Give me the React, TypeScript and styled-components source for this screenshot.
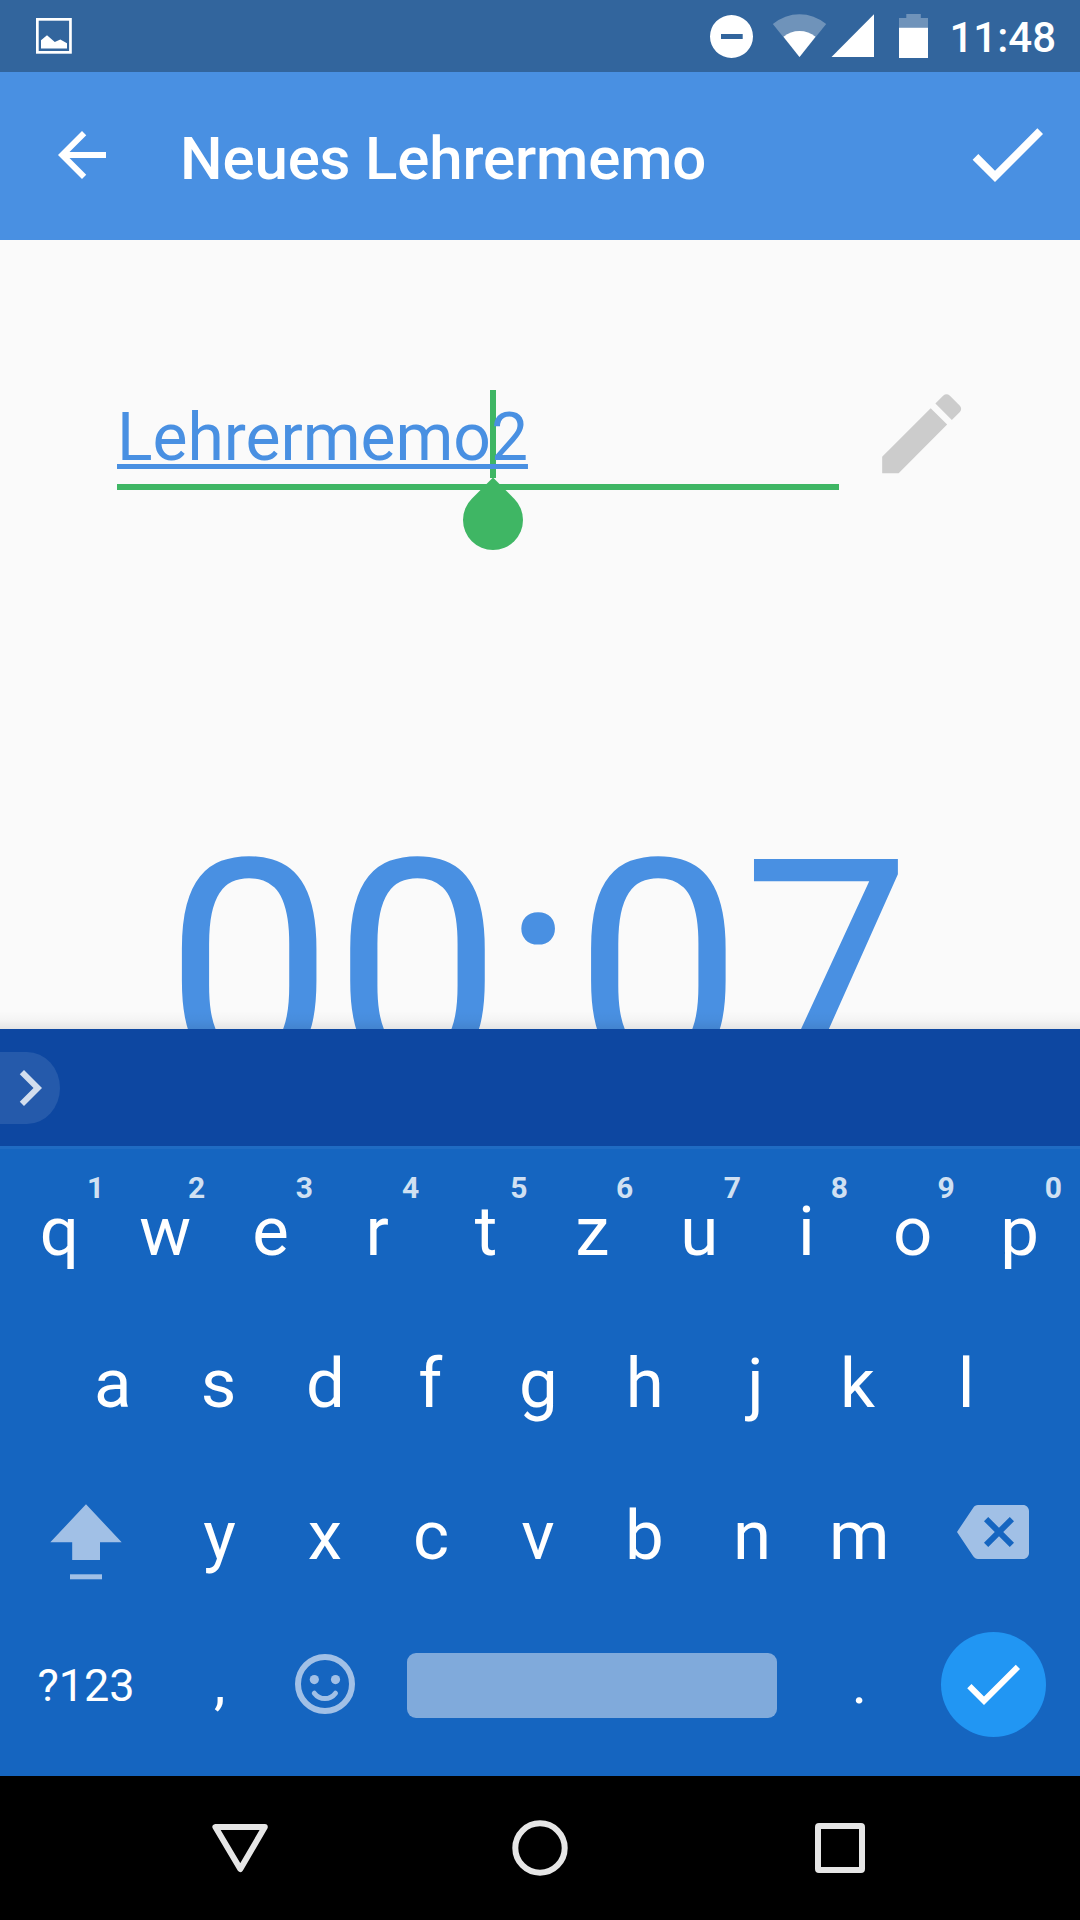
import React from "react";
import styled, { createGlobalStyle } from "styled-components";

const GlobalStyle = createGlobalStyle`
  * { box-sizing: border-box; }
  body { margin: 0; background: #000; }
  svg { display: block; flex: none; }
`;

const Screen = styled.div`
  width: 1080px;
  height: 1920px;
  display: flex;
  flex-direction: column;
  overflow: hidden;
  font-family: Roboto, "Noto Sans", sans-serif;
`;

const StatusBar = styled.header`
  height: 72px;
  flex: none;
  display: flex;
  align-items: center;
  justify-content: space-between;
  padding: 0 24px 0 36px;
  background: #32659d;
`;

const StatusGroup = styled.div`
  display: flex;
  align-items: center;
`;

const Time = styled.span`
  margin-left: 20px;
  font-size: 42px;
  font-weight: 500;
  line-height: 72px;
  padding-top: 3px;
  color: #fff;
`;

const AppBar = styled.div`
  height: 168px;
  flex: none;
  display: flex;
  align-items: center;
  padding: 0 25px 0 46px;
  background: #4990e2;
`;

const Title = styled.h1`
  flex: 1;
  margin: 0 0 0 62px;
  padding-top: 5px;
  font-size: 60px;
  font-weight: 500;
  line-height: 70px;
  letter-spacing: -0.15px;
  color: #fff;
`;

const IconButton = styled.button<{ $size: number; $lift?: number }>`
  width: ${(p) => p.$size}px;
  height: ${(p) => p.$size}px;
  margin: 0 0 ${(p) => p.$lift ?? 0}px;
  padding: 0;
  border: 0;
  background: none;
`;

const Content = styled.main`
  height: 789px;
  flex: none;
  background: #fafafa;
`;

const NameRow = styled.div`
  display: flex;
  align-items: flex-start;
  padding: 150px 0 0 117px;
`;

const Field = styled.div`
  position: relative;
  width: 722px;
  height: 100px;
  border-bottom: 6px solid #3fb664;
`;

const FieldText = styled.span`
  position: relative;
  z-index: 1;
  display: block;
  padding-top: 4px;
  font-size: 66px;
  line-height: 88px;
  letter-spacing: -0.05px;
  color: #4990e2;
  text-decoration: underline;
  text-decoration-thickness: 4.5px;
  text-underline-offset: 4px;
`;

const Caret = styled.i`
  position: absolute;
  left: 373px;
  top: 0;
  width: 6px;
  height: 88px;
  background: #3fb664;
`;

const Handle = styled.i`
  position: absolute;
  left: 346px;
  top: 100px;
  width: 60px;
  height: 60px;
  border-radius: 0 50% 50% 50%;
  transform: rotate(45deg);
  background: #3fb664;
`;

const EditButton = styled(IconButton)`
  margin: -9px 0 0 30px;
`;

const Timer = styled.div`
  margin-top: 329.5px;
  padding-right: 4px;
  font-size: 299.5px;
  line-height: 300px;
  text-align: center;
  color: #4990e2;
`;

const Keyboard = styled.section`
  position: relative;
  z-index: 1;
  height: 747px;
  flex: none;
  display: flex;
  flex-direction: column;
  background: #1565c0;
`;

const Shade = styled.div`
  position: absolute;
  left: 0;
  right: 0;
  top: -18px;
  height: 18px;
  background: linear-gradient(rgba(0, 0, 0, 0), rgba(0, 0, 0, 0.025) 50%, rgba(0, 0, 0, 0.085));
`;

const Suggestions = styled.div`
  height: 120px;
  flex: none;
  display: flex;
  align-items: center;
  border-bottom: 3px solid #1f6bc3;
  background: #0d47a1;
`;

const Expand = styled.button`
  width: 60px;
  height: 72px;
  margin: 1px 0 0;
  padding: 0;
  display: flex;
  align-items: center;
  border: 0;
  border-radius: 0 33px 33px 0 / 0 36px 36px 0;
  background: #255aab;
  overflow: hidden;
`;

const ExpandIcon = styled.svg`
  margin-left: -6px;
`;

const Rows = styled.div`
  padding: 6px 7px 0 5px;
`;

const Row = styled.div<{ $inset?: number }>`
  height: 152px;
  display: flex;
  padding: 0 ${(p) => p.$inset ?? 0}px;
`;

const Key = styled.div<{ $span?: number; $size?: number; $shift?: number; $nudge?: number }>`
  position: relative;
  width: ${(p) => (p.$span ?? 1) * 106.8}px;
  height: 152px;
  flex: none;
  display: flex;
  align-items: center;
  justify-content: center;
  padding-top: ${(p) => Math.max(0, p.$shift ?? 0)}px;
  padding-bottom: ${(p) => Math.max(0, -(p.$shift ?? 0))}px;
  padding-left: ${(p) => 2 * Math.max(0, p.$nudge ?? 0)}px;
  padding-right: ${(p) => 2 * Math.max(0, -(p.$nudge ?? 0))}px;
  font-size: ${(p) => p.$size ?? 69}px;
  line-height: 1;
  color: #fff;
`;

const Hint = styled.sup<{ $nudge: number }>`
  position: absolute;
  right: ${(p) => 11.5 - p.$nudge}px;
  top: 18px;
  font-size: 30px;
  font-weight: 700;
  line-height: 30px;
  color: #d0e0f2;
`;

const Space = styled.div`
  width: 370px;
  height: 65px;
  border-radius: 9px;
  background: #80aadb;
`;

const Enter = styled.div`
  width: 105px;
  height: 105px;
  display: flex;
  align-items: center;
  justify-content: center;
  border-radius: 50%;
  background: #2196f3;
`;

const NavBar = styled.nav`
  height: 144px;
  flex: none;
  display: grid;
  grid-template-columns: repeat(3, 300px);
  justify-content: center;
  align-items: center;
  justify-items: center;
  background: #000;
`;

const SOFT = "#a1c0e6";
const NAV = "#e6e6e6";

const CheckIcon = ({ size }: { size: number }) => (
  <svg width={size} height={size} viewBox="0 0 24 24" fill="#fff">
    <path d="M9 16.17L4.83 12l-1.42 1.41L9 19 21 7l-1.41-1.41z" />
  </svg>
);

const PictureIcon = () => (
  <svg width="36" height="36" viewBox="0 0 36 36">
    <rect x="1.35" y="1.35" width="33.1" height="33" fill="none" stroke="#fff" strokeWidth="2.7" />
    <path d="M5 30.6V22.2L11 17.2L18.8 24L24.3 21.4L31 25.2V30.6Z" fill="#fff" />
  </svg>
);

/* do-not-disturb, wifi, cell signal and battery share one strip */
const StatusIcons = () => (
  <svg width="220" height="48" viewBox="709 12 220 48" fill="#fff">
    <path
      fillRule="evenodd"
      d="M731.5 15a21.5 21.5 0 1 0 0 43a21.5 21.5 0 1 0 0-43zM721 34h21.7v5H721z"
    />
    <path d="M799.5 57L772.8 24Q785 14.2 799.5 14.2T826.2 24Z" opacity="0.3" />
    <path d="M799.5 57L783.5 36.8Q790.5 31 799.5 31T815.5 36.8Z" />
    <path d="M831.5 57H874V14.3Z" />
    <path d="M899 27.7V18H906.3V14H920.8V18H928V27.7Z" opacity="0.3" />
    <path d="M899 27.7H928V58H899Z" />
  </svg>
);

const ShiftIcon = () => (
  <svg width="72" height="76" viewBox="0 0 72 76" fill={SOFT}>
    <path d="M36 0.3L71.7 38.3H50V56H22.2V38.3H0.3Z" />
    <rect x="20" y="70.3" width="32" height="5" />
  </svg>
);

const BackspaceIcon = () => (
  <svg width="72" height="54" viewBox="0 3 24 18" fill={SOFT}>
    <path d="M22 3H7c-.69 0-1.23.35-1.59.88L0 12l5.41 8.11c.36.53.9.89 1.59.89h15c1.1 0 2-.9 2-2V5c0-1.1-.9-2-2-2zm-3 12.59L17.59 17 14 13.41 10.41 17 9 15.59 12.59 12 9 8.41 10.41 7 14 10.59 17.59 7 19 8.41 15.41 12 19 15.59z" />
  </svg>
);

const SmileIcon = () => (
  <svg width="60" height="60" viewBox="0 0 60 60" fill="none" stroke={SOFT}>
    <circle cx="30" cy="30" r="27" strokeWidth="6" />
    <circle cx="19.3" cy="25.6" r="4.6" fill={SOFT} stroke="none" />
    <circle cx="40.5" cy="25.6" r="4.6" fill={SOFT} stroke="none" />
    <path d="M19.3 39.2Q23.5 44.6 29.9 44.6T40.5 39.2" strokeWidth="5" strokeLinecap="round" />
  </svg>
);

/* letter, optical offset of the letter, optical offset of its digit */
const topRow: [string, number, number][] = [
  ["q", 1, 4],
  ["w", 0, -2],
  ["e", -1.5, -1],
  ["r", -1.5, -1.5],
  ["t", 0.5, 0],
  ["z", 0, -1],
  ["u", 0, 0],
  ["i", 0.5, 0],
  ["o", 0, 0],
  ["p", 0, 0.5],
];
const homeRow: [string, number][] = [
  ["a", 1],
  ["s", 0],
  ["d", 0],
  ["f", -2],
  ["g", -0.5],
  ["h", -1],
  ["j", 3],
  ["k", -2],
  ["l", 0],
];
const lowerRow: [string, number][] = [
  ["y", 1],
  ["x", -0.5],
  ["c", -1],
  ["v", -1],
  ["b", -1.5],
  ["n", -0.5],
  ["m", 0],
];

export default function App() {
  return (
    <Screen>
      <GlobalStyle />
      <StatusBar>
        <PictureIcon />
        <StatusGroup>
          <StatusIcons />
          <Time>11:48</Time>
        </StatusGroup>
      </StatusBar>

      <AppBar>
        <IconButton $size={72} $lift={2} aria-label="Zurück">
          <svg width="72" height="72" viewBox="0 0 24 24" fill="#fff">
            <path d="M20 11H7.83l5.59-5.59L12 4l-8 8 8 8 1.41-1.41L7.83 13H20v-2z" />
          </svg>
        </IconButton>
        <Title>Neues Lehrermemo</Title>
        <IconButton $size={96} $lift={5} aria-label="Speichern">
          <CheckIcon size={96} />
        </IconButton>
      </AppBar>

      <Content>
        <NameRow>
          <Field>
            <FieldText>Lehrermemo2</FieldText>
            <Caret />
            <Handle />
          </Field>
          <EditButton $size={105} aria-label="Bearbeiten">
            <svg width="105.3" height="105.3" viewBox="0 0 24 24" fill="#ccc">
              <path d="M3 17.25V21h3.75L17.81 9.94l-3.75-3.75L3 17.25zM20.71 7.04c.39-.39.39-1.02 0-1.41l-2.34-2.34c-.39-.39-1.02-.39-1.41 0l-1.83 1.83 3.75 3.75 1.83-1.83z" />
            </svg>
          </EditButton>
        </NameRow>
        <Timer>00:07</Timer>
      </Content>

      <Keyboard>
        <Shade />
        <Suggestions>
          <Expand aria-label="Mehr">
            <ExpandIcon width="72" height="72" viewBox="0 0 24 24" fill="#d3deee">
              <path d="M10 6L8.59 7.41 13.17 12l-4.58 4.59L10 18l6-6z" />
            </ExpandIcon>
          </Expand>
        </Suggestions>
        <Rows>
          <Row>
            {topRow.map(([letter, nudge, hintNudge], i) => (
              <Key key={letter} $nudge={nudge}>
                {letter}
                <Hint $nudge={hintNudge}>{(i + 1) % 10}</Hint>
              </Key>
            ))}
          </Row>
          <Row $inset={53.4}>
            {homeRow.map(([letter, nudge]) => (
              <Key key={letter} $nudge={nudge}>
                {letter}
              </Key>
            ))}
          </Row>
          <Row>
            <Key $span={1.5} $shift={13} $nudge={1}>
              <ShiftIcon />
            </Key>
            {lowerRow.map(([letter, nudge]) => (
              <Key key={letter} $nudge={nudge}>
                {letter}
              </Key>
            ))}
            <Key $span={1.5} $shift={-6}>
              <BackspaceIcon />
            </Key>
          </Row>
          <Row>
            <Key $span={1.5} $size={45} $shift={-4} $nudge={1}>
              ?123
            </Key>
            <Key $size={58} $shift={-8} $nudge={1}>
              ,
            </Key>
            <Key $shift={-6}>
              <SmileIcon />
            </Key>
            <Key $span={4} $shift={-3}>
              <Space />
            </Key>
            <Key $size={58} $shift={-8}>
              .
            </Key>
            <Key $span={1.5} $shift={-6} $nudge={0.5}>
              <Enter>
                <CheckIcon size={72} />
              </Enter>
            </Key>
          </Row>
        </Rows>
      </Keyboard>

      <NavBar>
        <svg width="58" height="52" viewBox="211 1822 58 52" fill="none" stroke={NAV} strokeWidth="6" strokeLinejoin="round">
          <path d="M215.4 1827H264.8L240.3 1869Z" />
        </svg>
        <svg width="56" height="56" viewBox="0 0 56 56" fill="none" stroke={NAV} strokeWidth="6">
          <circle cx="28" cy="28" r="24.7" />
        </svg>
        <svg width="50" height="50" viewBox="0 0 50 50" fill="none" stroke={NAV} strokeWidth="6">
          <rect x="3" y="3" width="44" height="44" rx="1" strokeLinejoin="round" />
        </svg>
      </NavBar>
    </Screen>
  );
}
